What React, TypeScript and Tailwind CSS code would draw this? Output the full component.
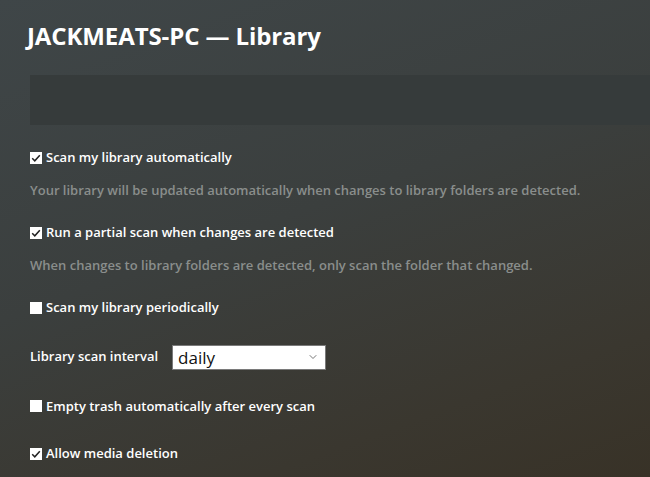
import { ChevronDown } from 'lucide-react';

const Box = ({ checked }: { checked: boolean }) => (
  <span className="flex h-[12px] w-[12px] shrink-0 items-center justify-center bg-white">
    {checked && (
      <svg viewBox="0 0 12 12" className="h-[12px] w-[12px]">
        <path d="M2.2 6.2 L4.8 8.8 L9.8 3.2" fill="none" stroke="#222" strokeWidth="1.5" />
      </svg>
    )}
  </span>
);

const Check = ({ checked, label }: { checked: boolean; label: string }) => (
  <label className="flex items-center gap-[4px] text-[13px] font-semibold text-white">
    <Box checked={checked} />
    <span>{label}</span>
  </label>
);

const Hint = ({ children }: { children: string }) => (
  <p className="mt-[13px] text-[13px] font-semibold text-[#8a8e8c]">{children}</p>
);

export default function App() {
  return (
    <div
      className="h-[477px] w-[650px] overflow-hidden bg-[linear-gradient(160deg,#3f4648_0%,#3b3f3e_45%,#3a372f_80%,#383227_100%)] pl-[30px]"
      style={{ fontFamily: '"Open Sans", "Liberation Sans", sans-serif' }}
    >
      <h1 className="-ml-[3px] pt-[20px] text-[24px] font-bold leading-[32px] tracking-[-0.1px] text-white">
        JACKMEATS-PC — Library
      </h1>

      <div className="mt-[23px] h-[50px] bg-[#363b3b]" />

      <div className="pt-[23px]">
        <Check checked label="Scan my library automatically" />
        <Hint>Your library will be updated automatically when changes to library folders are detected.</Hint>

        <div className="mt-[23px]">
          <Check checked label="Run a partial scan when changes are detected" />
        </div>
        <Hint>When changes to library folders are detected, only scan the folder that changed.</Hint>

        <div className="mt-[23px]">
          <Check checked={false} label="Scan my library periodically" />
        </div>

        <div className="mt-[27px] flex items-center gap-[14px]">
          <span className="text-[13px] font-semibold text-white">Library scan interval</span>
          <div className="flex h-[25px] w-[154px] items-center justify-between border border-[#7a7a7a] bg-white pl-[5px] pr-[6px]">
            <span className="text-[17px] leading-none text-[#111]">daily</span>
            <ChevronDown className="h-[12px] w-[12px] text-[#777]" strokeWidth={2} />
          </div>
        </div>

        <div className="mt-[27px]">
          <Check checked={false} label="Empty trash automatically after every scan" />
        </div>

        <div className="mt-[28px]">
          <Check checked label="Allow media deletion" />
        </div>
      </div>
    </div>
  );
}
